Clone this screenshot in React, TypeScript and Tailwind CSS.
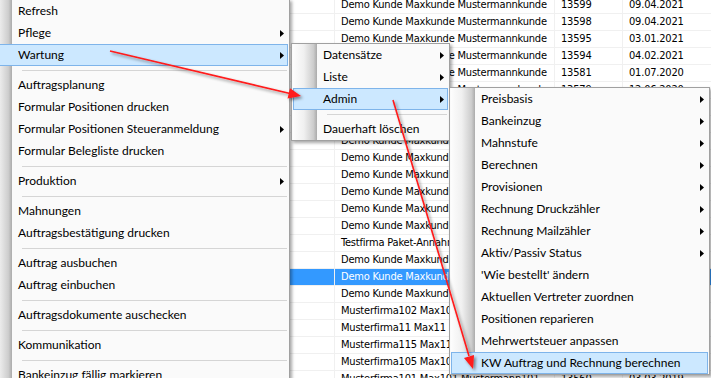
import React from "react";

type Item = { label: string; sub?: boolean; hl?: boolean } | "sep";

const mainItems: Item[] = [
  { label: "Refresh" },
  { label: "Pflege", sub: true },
  { label: "Wartung", sub: true, hl: true },
  "sep",
  { label: "Auftragsplanung" },
  { label: "Formular Positionen drucken" },
  { label: "Formular Positionen Steueranmeldung", sub: true },
  { label: "Formular Belegliste drucken" },
  "sep",
  { label: "Produktion", sub: true },
  "sep",
  { label: "Mahnungen" },
  { label: "Auftragsbestätigung drucken" },
  "sep",
  { label: "Auftrag ausbuchen" },
  { label: "Auftrag einbuchen" },
  "sep",
  { label: "Auftragsdokumente auschecken" },
  "sep",
  { label: "Kommunikation" },
  "sep",
  { label: "Bankeinzug fällig markieren" },
];

const sub2Items: Item[] = [
  { label: "Datensätze", sub: true },
  { label: "Liste", sub: true },
  { label: "Admin", sub: true, hl: true },
  "sep",
  { label: "Dauerhaft löschen" },
];

const sub3Items: Item[] = [
  { label: "Preisbasis", sub: true },
  { label: "Bankeinzug", sub: true },
  { label: "Mahnstufe", sub: true },
  { label: "Berechnen", sub: true },
  { label: "Provisionen", sub: true },
  { label: "Rechnung Druckzähler", sub: true },
  { label: "Rechnung Mailzähler", sub: true },
  { label: "Aktiv/Passiv Status", sub: true },
  { label: "'Wie bestellt' ändern" },
  { label: "Aktuellen Vertreter zuordnen" },
  { label: "Positionen reparieren" },
  { label: "Mehrwertsteuer anpassen" },
  { label: "KW Auftrag und Rechnung berechnen", hl: true },
];

const demo = "Demo Kunde Maxkunde Mustermannkunde";
const rows: { name: string; num: string; date: string; sel?: boolean }[] = [
  { name: demo, num: "13599", date: "09.04.2021" },
  { name: demo, num: "13598", date: "09.04.2021" },
  { name: demo, num: "13595", date: "03.01.2021" },
  { name: demo, num: "13594", date: "04.02.2021" },
  { name: demo, num: "13581", date: "01.07.2020" },
  { name: demo, num: "13579", date: "12.06.2020" },
  { name: demo, num: "13577", date: "02.06.2020" },
  { name: demo, num: "13576", date: "28.05.2020" },
  { name: demo, num: "13575", date: "20.05.2020" },
  { name: demo, num: "13574", date: "14.05.2020" },
  { name: demo, num: "13573", date: "06.05.2020" },
  { name: demo, num: "13572", date: "30.04.2020" },
  { name: demo, num: "13571", date: "22.04.2020" },
  { name: demo, num: "13570", date: "15.04.2020" },
  { name: "Testfirma Paket-Annahme Mustermann", num: "13569", date: "08.04.2020" },
  { name: demo, num: "13568", date: "01.04.2020" },
  { name: demo, num: "13567", date: "25.03.2020", sel: true },
  { name: demo, num: "13566", date: "18.03.2020" },
  { name: "Musterfirma102 Max102 Mustermann102", num: "13565", date: "11.03.2020" },
  { name: "Musterfirma11 Max11 Mustermann11", num: "13564", date: "04.03.2020" },
  { name: "Musterfirma115 Max115 Mustermann115", num: "13563", date: "26.02.2020" },
  { name: "Musterfirma105 Max105 Mustermann105", num: "13562", date: "19.02.2020" },
  { name: "Musterfirma101 Max101 Mustermann101", num: "13560", date: "03.03.2019" },
];

function Arrow() {
  return (
    <svg width="4" height="7" viewBox="0 0 4 7" className="shrink-0">
      <path d="M0 0 L4 3.5 L0 7 Z" fill="#000" />
    </svg>
  );
}

function Menu({ items, className }: { items: Item[]; className: string }) {
  return (
    <div
      className={`absolute border border-[#a0a0a0] bg-[#fafafa] px-[1px] shadow-[2px_2px_3px_rgba(0,0,0,0.35)] font-['Lato',sans-serif] text-[12px] text-black ${className}`}
    >
      {items.map((it, i) =>
        it === "sep" ? (
          <div key={i} className="flex h-[8px]">
            <div className="w-[24px] shrink-0 bg-[linear-gradient(to_right,#fdfdfd,#f0f0f0_45%,#cdcdcd_85%,#ababab)]" />
            <div className="flex-1 pl-[10px] pr-[1px] pt-[4px]">
              <div className="h-[1px] bg-[#d5d5d5]" />
            </div>
          </div>
        ) : it.hl ? (
          <div
            key={i}
            className="flex h-[22px] items-center border border-[#7eb4ea] bg-[#cce8ff] pr-[3px]"
          >
            <div className="w-[23px] shrink-0" />
            <div className="flex-1 whitespace-nowrap pl-[6px]">{it.label}</div>
            {it.sub && <Arrow />}
          </div>
        ) : (
          <div key={i} className="flex h-[22px] items-center pr-[4px]">
            <div className="h-full w-[24px] shrink-0 bg-[linear-gradient(to_right,#fdfdfd,#f0f0f0_45%,#cdcdcd_85%,#ababab)]" />
            <div className="flex-1 whitespace-nowrap pl-[6px]">{it.label}</div>
            {it.sub && <Arrow />}
          </div>
        )
      )}
    </div>
  );
}

export default function App() {
  return (
    <div className="relative h-[378px] w-[711px] overflow-hidden bg-white">
      {/* background grid */}
      <div className="mt-[-3px] font-['DejaVu_Sans_Condensed','Liberation_Sans',sans-serif] text-[11px] tracking-[-0.2px]">
        {rows.map((r, i) => (
          <div
            key={i}
            className={`flex h-[17px] border-b border-[#f0f0f0] ${r.sel ? "bg-[#3399ff] text-white" : "bg-white text-black"}`}
          >
            <div className="w-[335px] shrink-0 border-r border-[#f0f0f0]" />
            <div className="w-[220px] shrink-0 overflow-hidden whitespace-nowrap border-r border-[#f0f0f0] pl-[6px] leading-[16px]">
              {r.name}
            </div>
            <div className="w-[68px] shrink-0 overflow-hidden whitespace-nowrap border-r border-[#f0f0f0] pl-[6px] leading-[16px]">
              {r.num}
            </div>
            <div className="flex-1 overflow-hidden whitespace-nowrap pl-[6px] leading-[16px]">{r.date}</div>
          </div>
        ))}
      </div>

      <Menu items={mainItems} className="left-[-14px] top-[-1px] w-[304px]" />
      <Menu items={sub2Items} className="left-[291px] top-[43px] w-[159px]" />
      <Menu items={sub3Items} className="left-[449px] top-[87px] w-[261px]" />

      {/* red annotation arrows */}
      <svg className="pointer-events-none absolute left-0 top-0" width="711" height="378">
        <defs>
          <filter id="sh" x="-20%" y="-20%" width="140%" height="140%">
            <feDropShadow dx="2" dy="2" stdDeviation="1.5" floodColor="#000" floodOpacity="0.45" />
          </filter>
        </defs>
        <g filter="url(#sh)">
          <line x1="110" y1="51" x2="290" y2="93.5" stroke="#ff1a1a" strokeWidth="1.6" />
          <path d="M301 96 L287.5 98.5 L290 88.3 Z" fill="#ff1a1a" />
          <line x1="393" y1="100" x2="469" y2="356" stroke="#ff1a1a" strokeWidth="1.6" />
          <path d="M473 369 L464 358 L474 355 Z" fill="#ff1a1a" />
        </g>
      </svg>
    </div>
  );
}
